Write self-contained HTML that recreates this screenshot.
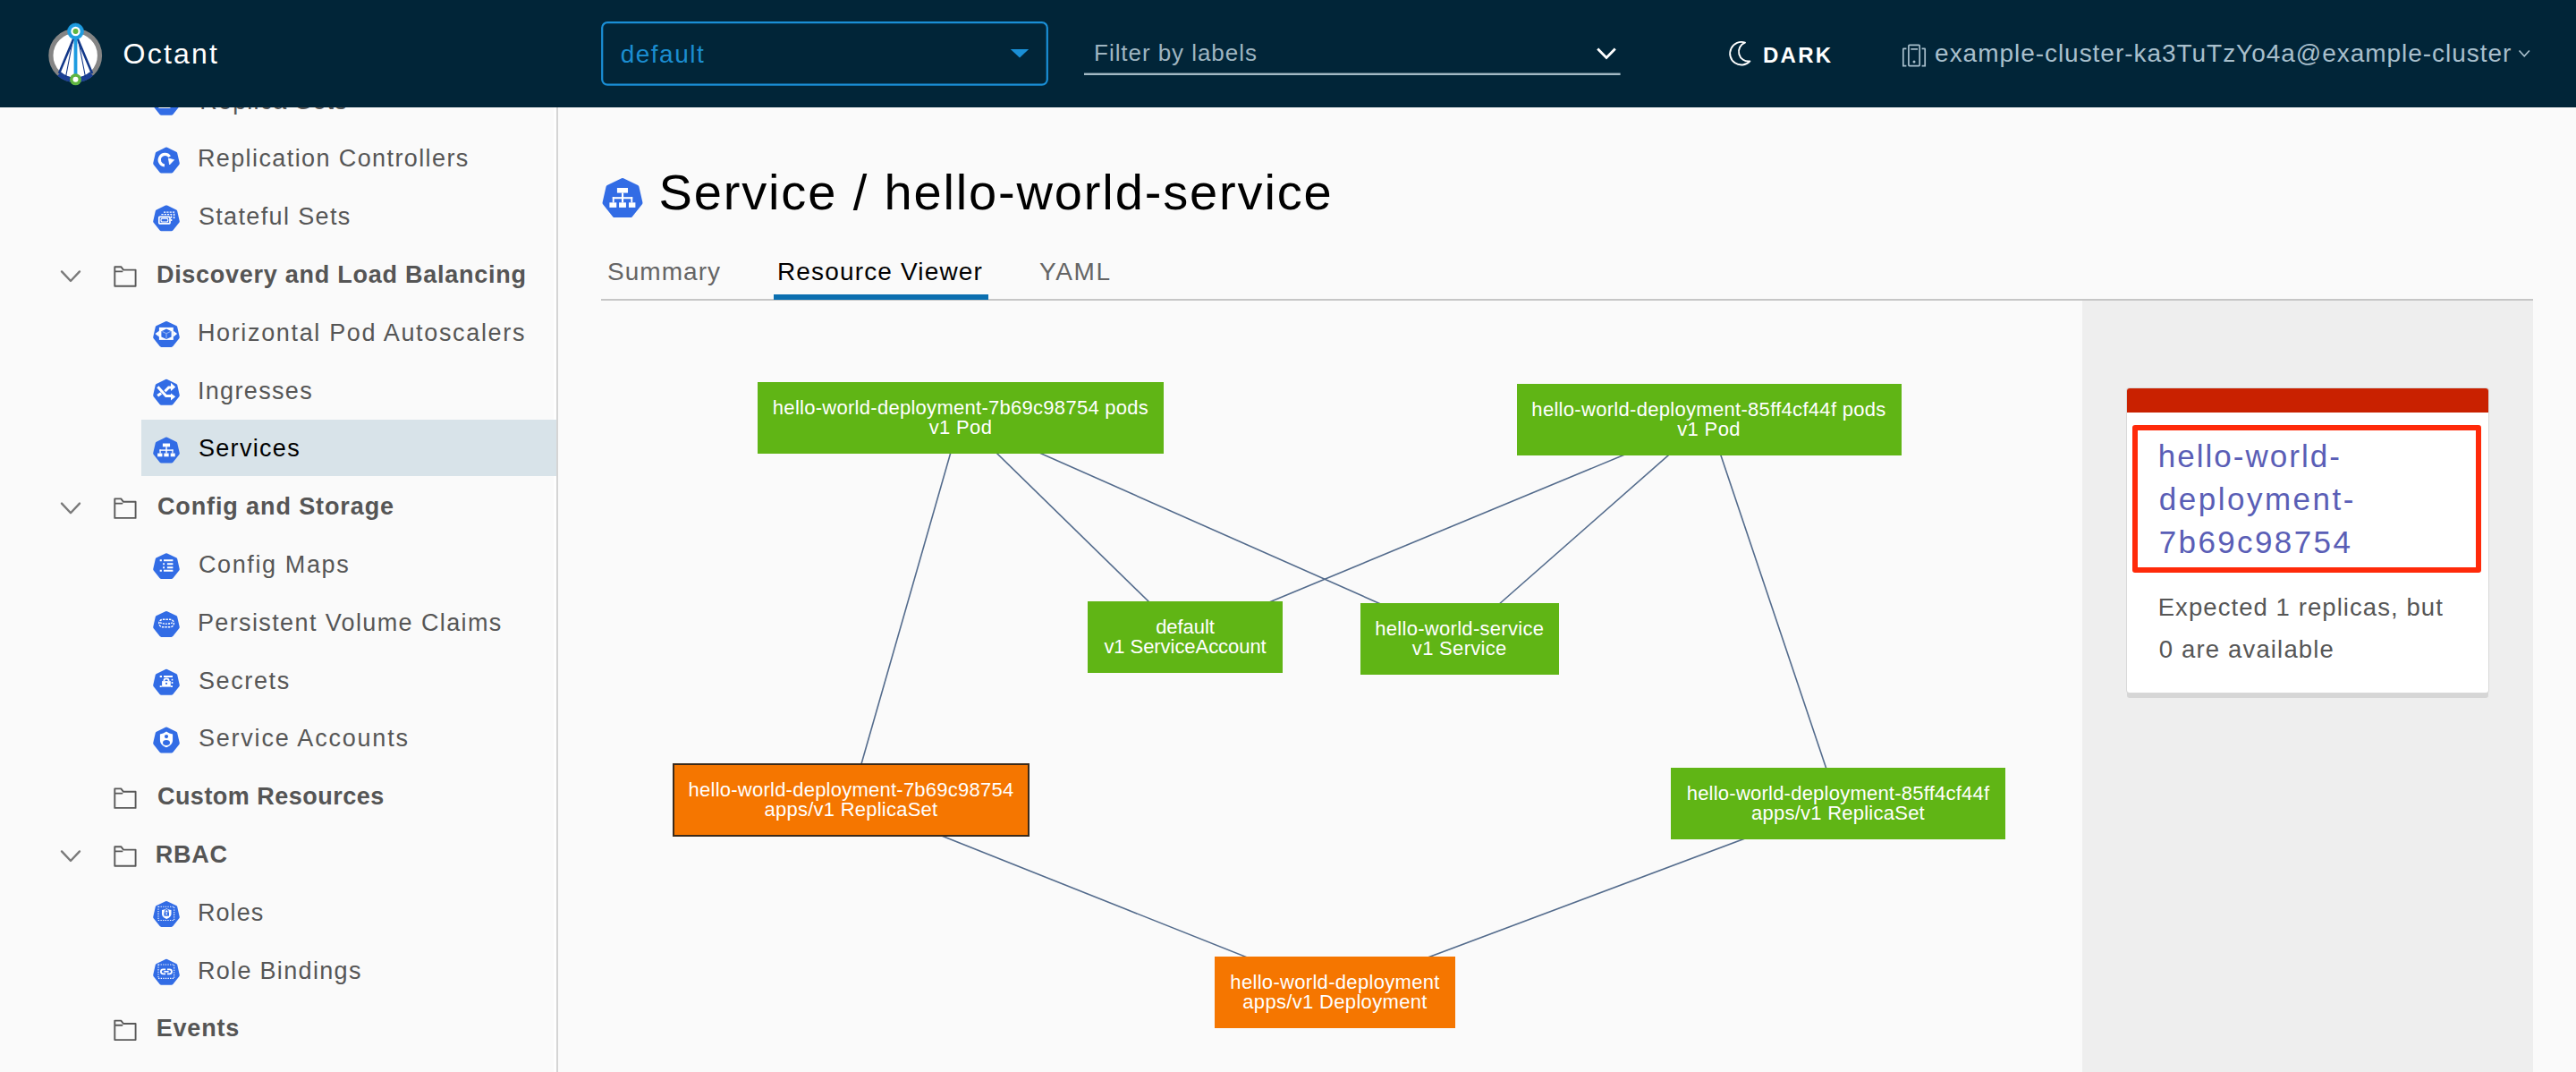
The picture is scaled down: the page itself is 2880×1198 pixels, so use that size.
<!DOCTYPE html>
<html><head><meta charset="utf-8"><style>
html,body{margin:0;padding:0;}
body{width:2880px;height:1198px;overflow:hidden;background:#fafafa;position:relative;font-family:'Liberation Sans', sans-serif;}
.t{position:absolute;white-space:pre;line-height:1;}
.node{position:absolute;display:flex;align-items:center;justify-content:center;text-align:center;color:#fff;font-size:22px;line-height:22px;white-space:pre;box-sizing:border-box;}
svg{position:absolute;left:0;top:0;overflow:visible;}
</style></head><body>
<div id="sidebar" style="position:absolute;left:0;top:0;width:622px;height:1198px;background:#fafafa;border-right:2px solid #d5d5d5;"></div><div style="position:absolute;left:618.5px;top:0;width:3.5px;height:1198px;background:#fefefe"></div>
<div class="t" style="left:223.30px;top:99.5px;font-size:27px;letter-spacing:1.175px;color:#565656;">Replica Sets</div><div class="t" style="left:220.90px;top:164.3px;font-size:27px;letter-spacing:1.399px;color:#565656;">Replication Controllers</div><div class="t" style="left:221.90px;top:229.1px;font-size:27px;letter-spacing:1.359px;color:#565656;">Stateful Sets</div><div class="t" style="left:174.90px;top:293.9px;font-size:27px;font-weight:bold;letter-spacing:0.737px;color:#555555;">Discovery and Load Balancing</div><div class="t" style="left:220.90px;top:358.7px;font-size:27px;letter-spacing:1.653px;color:#565656;">Horizontal Pod Autoscalers</div><div class="t" style="left:220.90px;top:423.5px;font-size:27px;letter-spacing:1.342px;color:#565656;">Ingresses</div><div style="position:absolute;left:158px;top:469.2px;width:464px;height:63.3px;background:#d8e3e9"></div><div class="t" style="left:221.90px;top:488.3px;font-size:27px;letter-spacing:1.324px;color:#000000;">Services</div><div class="t" style="left:175.90px;top:553.1px;font-size:27px;font-weight:bold;letter-spacing:0.894px;color:#555555;">Config and Storage</div><div class="t" style="left:221.90px;top:617.9px;font-size:27px;letter-spacing:1.622px;color:#565656;">Config Maps</div><div class="t" style="left:220.90px;top:682.7px;font-size:27px;letter-spacing:1.382px;color:#565656;">Persistent Volume Claims</div><div class="t" style="left:221.90px;top:747.5px;font-size:27px;letter-spacing:1.626px;color:#565656;">Secrets</div><div class="t" style="left:221.90px;top:812.3px;font-size:27px;letter-spacing:1.799px;color:#565656;">Service Accounts</div><div class="t" style="left:175.90px;top:877.1px;font-size:27px;font-weight:bold;letter-spacing:0.495px;color:#555555;">Custom Resources</div><div class="t" style="left:173.70px;top:941.9px;font-size:27px;font-weight:bold;letter-spacing:0.800px;color:#555555;">RBAC</div><div class="t" style="left:220.90px;top:1006.7px;font-size:27px;letter-spacing:1.092px;color:#565656;">Roles</div><div class="t" style="left:220.90px;top:1071.5px;font-size:27px;letter-spacing:1.324px;color:#565656;">Role Bindings</div><div class="t" style="left:174.70px;top:1136.3px;font-size:27px;font-weight:bold;letter-spacing:0.811px;color:#555555;">Events</div>
<svg width="2880" height="1198" style="z-index:1"><polygon points="186.00,102.00 196.09,106.86 198.58,117.77 191.60,126.52 180.40,126.52 173.42,117.77 175.91,106.86" fill="#326ce5" stroke="#326ce5" stroke-width="4.4" stroke-linejoin="round"/><g transform="translate(186.00,114.90) scale(1.0)" fill="none" stroke="#ffffff"><rect x="-8.2" y="-2.1" width="12.2" height="7.4" rx="0.8" stroke-width="1.7"/><rect x="-6.0" y="-0.3" width="7.8" height="3.8" rx="1.6" stroke-width="1.2"/><path d="M-5.6,-4.9 H5.6 V2.4" stroke-width="1.4" stroke-dasharray="2.2,1.1"/><path d="M-3.0,-7.4 H8.6 V0" stroke-width="1.4" stroke-dasharray="2.2,1.1"/></g><polygon points="186.00,166.80 196.09,171.66 198.58,182.57 191.60,191.32 180.40,191.32 173.42,182.57 175.91,171.66" fill="#326ce5" stroke="#326ce5" stroke-width="4.4" stroke-linejoin="round"/><g transform="translate(186.00,179.70) scale(1.0)" fill="none" stroke="#ffffff"><path d="M3.66,-4.61 A6.3,6.3 0 1 0 -2.05,5.28" stroke-width="3.2"/><path d="M2.4,-2.6 L8.6,-1.0 L3.6,4.2 z" fill="#ffffff" stroke="#ffffff" stroke-width="0.8" stroke-linejoin="round"/></g><polygon points="186.00,231.60 196.09,236.46 198.58,247.37 191.60,256.12 180.40,256.12 173.42,247.37 175.91,236.46" fill="#326ce5" stroke="#326ce5" stroke-width="4.4" stroke-linejoin="round"/><g transform="translate(186.00,244.50) scale(1.0)" fill="none" stroke="#ffffff"><rect x="-8.2" y="-2.1" width="12.2" height="7.4" rx="0.8" stroke-width="1.7"/><rect x="-6.0" y="-0.3" width="7.8" height="3.8" rx="1.6" stroke-width="1.2"/><path d="M-5.6,-4.9 H5.6 V2.4" stroke-width="1.4" stroke-dasharray="2.2,1.1"/><path d="M-3.0,-7.4 H8.6 V0" stroke-width="1.4" stroke-dasharray="2.2,1.1"/></g><path d="M69,303.4 L79,314.0 L89,303.4" fill="none" stroke="#7a7a7a" stroke-width="2.4" stroke-linecap="round" stroke-linejoin="round"/><path d="M128.3,298.2 H135.3 L138,301.6 H151.6 V319.7 H128.3 z M128.3,303.4 H136.5" fill="none" stroke="#595959" stroke-width="1.9" stroke-linejoin="round" stroke-linecap="round"/><polygon points="186.00,361.20 196.09,366.06 198.58,376.97 191.60,385.72 180.40,385.72 173.42,376.97 175.91,366.06" fill="#326ce5" stroke="#326ce5" stroke-width="4.4" stroke-linejoin="round"/><g transform="translate(186.00,374.10) scale(1.0)" fill="none" stroke="#ffffff"><rect x="-8.1" y="-8.2" width="15.9" height="14" fill="#ffffff" stroke="none"/><path d="M0,-6.6 L5.6,-3.8 V2.4 L0,5.0 L-5.6,2.4 V-3.8 z" fill="#326ce5" stroke="none"/><path d="M-4.6,-3.6 L0,-1.4 L4.6,-3.6 M0,-1.4 V4" stroke="#8fb0f2" stroke-width="1.2"/><path d="M-12.5,-1 L-8.1,-4.4 V2.4 z M12.1,-1 L7.8,-4.4 V2.4 z" fill="#ffffff" stroke="none"/></g><polygon points="186.00,426.00 196.09,430.86 198.58,441.77 191.60,450.52 180.40,450.52 173.42,441.77 175.91,430.86" fill="#326ce5" stroke="#326ce5" stroke-width="4.4" stroke-linejoin="round"/><g transform="translate(186.00,438.90) scale(1.0)" fill="none" stroke="#ffffff"><path d="M-9.6,-6.6 L-0.4,3.6 H5.5" stroke-width="3.0"/><path d="M-9.8,3.4 L-5.8,0.6" stroke-width="3.0"/><path d="M-1.6,-1.6 L2.6,-5.8 H5.5" stroke-width="3.0"/><path d="M5,-11.2 L10.2,-6.3 L5,-1.8 z M5,0.6 L10.2,4.3 L5,8.6 z" fill="#ffffff" stroke="none"/></g><polygon points="186.00,490.80 196.09,495.66 198.58,506.57 191.60,515.32 180.40,515.32 173.42,506.57 175.91,495.66" fill="#326ce5" stroke="#326ce5" stroke-width="4.4" stroke-linejoin="round"/><g transform="translate(186.00,503.70) scale(1.0)" fill="none" stroke="#ffffff"><g fill="#ffffff" stroke="none"><rect x="-4.1" y="-8.15" width="8.15" height="3.75"/><rect x="-0.7" y="-4.5" width="1.45" height="7.4"/><rect x="-7.55" y="-1.3" width="15.1" height="1.4"/><rect x="-7.55" y="-1.3" width="1.25" height="4.2"/><rect x="6.3" y="-1.3" width="1.25" height="4.2"/><rect x="-9.85" y="2.85" width="5.3" height="3.75"/><rect x="-2.65" y="2.85" width="5.3" height="3.75"/><rect x="4.7" y="2.85" width="5.0" height="3.75"/></g></g><path d="M69,562.6 L79,573.2 L89,562.6" fill="none" stroke="#7a7a7a" stroke-width="2.4" stroke-linecap="round" stroke-linejoin="round"/><path d="M128.3,557.4 H135.3 L138,560.8 H151.6 V578.9 H128.3 z M128.3,562.6 H136.5" fill="none" stroke="#595959" stroke-width="1.9" stroke-linejoin="round" stroke-linecap="round"/><polygon points="186.00,620.40 196.09,625.26 198.58,636.17 191.60,644.92 180.40,644.92 173.42,636.17 175.91,625.26" fill="#326ce5" stroke="#326ce5" stroke-width="4.4" stroke-linejoin="round"/><g transform="translate(186.00,633.30) scale(1.0)" fill="none" stroke="#ffffff"><path d="M-7.3,-7 H-5.1 M-3,-7 H7.4 M-7.3,4.4 H-5.1 M-3,4.4 H7.4" stroke-width="2"/><path d="M-3.8,-3 H-2 M0.9,-3 H7.4 M-3.8,0.9 H-2 M0.9,0.9 H7.4" stroke-width="2"/></g><polygon points="186.00,685.20 196.09,690.06 198.58,700.97 191.60,709.72 180.40,709.72 173.42,700.97 175.91,690.06" fill="#326ce5" stroke="#326ce5" stroke-width="4.4" stroke-linejoin="round"/><g transform="translate(186.00,698.10) scale(1.0)" fill="none" stroke="#ffffff"><rect x="-8.2" y="-5.8" width="16.6" height="8.4" rx="4.2" stroke-width="1.4" stroke-dasharray="2.4,1.1"/><path d="M-7,-2.2 C-3,-0.6 3,-0.6 7,-2.2" stroke-width="1.3" stroke-dasharray="2,1"/></g><polygon points="186.00,750.00 196.09,754.86 198.58,765.77 191.60,774.52 180.40,774.52 173.42,765.77 175.91,754.86" fill="#326ce5" stroke="#326ce5" stroke-width="4.4" stroke-linejoin="round"/><g transform="translate(186.00,762.90) scale(1.0)" fill="none" stroke="#ffffff"><path d="M-7.3,-6.9 H-5 M-3,-6.9 H7 M-7.3,4.3 H-5.2 M4.8,4.3 H7" stroke-width="1.8"/><path d="M6.5,-4.2 V-2.5 M6.5,-0.8 V1" stroke-width="1.6"/><rect x="-4.9" y="-1.8" width="9.7" height="6.5" fill="#ffffff" stroke="none"/><path d="M-2.6,-1.8 V-2.2 A2.6,2.4 0 0 1 2.6,-2.2 V-1.8" stroke-width="1.8"/><circle cx="0" cy="0.9" r="1.1" fill="#326ce5" stroke="none"/></g><polygon points="186.00,814.80 196.09,819.66 198.58,830.57 191.60,839.32 180.40,839.32 173.42,830.57 175.91,819.66" fill="#326ce5" stroke="#326ce5" stroke-width="4.4" stroke-linejoin="round"/><g transform="translate(186.00,827.70) scale(1.0)" fill="none" stroke="#ffffff"><path d="M0,-10.2 C2.2,-8.6 4.8,-7.6 7.1,-7.2 V-0.6 C7.1,3.8 3.6,6.2 0,7.6 C-3.6,6.2 -7.1,3.8 -7.1,-0.6 V-7.2 C-4.8,-7.6 -2.2,-8.6 0,-10.2 z" fill="#ffffff" stroke="none"/><circle cx="0" cy="-4.6" r="2.1" fill="#326ce5" stroke="none"/><ellipse cx="0" cy="2.4" rx="4.0" ry="3.0" fill="#326ce5" stroke="none"/></g><path d="M128.3,881.4 H135.3 L138,884.8 H151.6 V902.9 H128.3 z M128.3,886.6 H136.5" fill="none" stroke="#595959" stroke-width="1.9" stroke-linejoin="round" stroke-linecap="round"/><path d="M69,951.4 L79,962.0 L89,951.4" fill="none" stroke="#7a7a7a" stroke-width="2.4" stroke-linecap="round" stroke-linejoin="round"/><path d="M128.3,946.2 H135.3 L138,949.6 H151.6 V967.7 H128.3 z M128.3,951.4 H136.5" fill="none" stroke="#595959" stroke-width="1.9" stroke-linejoin="round" stroke-linecap="round"/><polygon points="186.00,1009.20 196.09,1014.06 198.58,1024.97 191.60,1033.72 180.40,1033.72 173.42,1024.97 175.91,1014.06" fill="#326ce5" stroke="#326ce5" stroke-width="4.4" stroke-linejoin="round"/><g transform="translate(186.00,1022.10) scale(1.0)" fill="none" stroke="#ffffff"><rect x="-9" y="-8.8" width="17.7" height="15.2" stroke-width="1.1" stroke-dasharray="1.3,1.3"/><path d="M0.25,-6.9 C2,-5.8 3.8,-5.2 5.5,-5 V-0.8 C5.5,2.2 3,3.8 0.25,4.8 C-2.5,3.8 -5,2.2 -5,-0.8 V-5 C-3.3,-5.2 -1.5,-5.8 0.25,-6.9 z" fill="#ffffff" stroke="none"/><rect x="-2.6" y="-2.7" width="5.6" height="4.2" fill="#326ce5" stroke="none"/><path d="M-1.5,-2.7 V-3.8 A1.75,1.75 0 0 1 2,-3.8 V-2.7" stroke="#326ce5" stroke-width="1.2"/><rect x="-0.6" y="-1.6" width="1.6" height="1.6" fill="#ffffff" stroke="none"/></g><polygon points="186.00,1074.00 196.09,1078.86 198.58,1089.77 191.60,1098.52 180.40,1098.52 173.42,1089.77 175.91,1078.86" fill="#326ce5" stroke="#326ce5" stroke-width="4.4" stroke-linejoin="round"/><g transform="translate(186.00,1086.90) scale(1.0)" fill="none" stroke="#ffffff"><rect x="-9" y="-8.9" width="17.7" height="15.4" stroke-width="1.1" stroke-dasharray="1.3,1.3"/><path d="M-0.9,-3.6 H-3.6 A2.5,2.5 0 0 0 -3.6,1.4 H-0.9 M1.0,-3.6 H3.5 A2.5,2.5 0 0 1 3.5,1.4 H1.0" stroke-width="1.8"/><path d="M-2.6,-1.1 H2.6" stroke-width="1.6"/></g><path d="M128.3,1140.6 H135.3 L138,1144.0 H151.6 V1162.1 H128.3 z M128.3,1145.8 H136.5" fill="none" stroke="#595959" stroke-width="1.9" stroke-linejoin="round" stroke-linecap="round"/></svg>
<div id="main">
<svg width="2880" height="1198"><polygon points="696.00,201.50 712.11,209.26 716.08,226.68 704.94,240.66 687.06,240.66 675.92,226.68 679.89,209.26" fill="#326ce5" stroke="#326ce5" stroke-width="4.8" stroke-linejoin="round"/><g transform="translate(696.00,222.10) scale(1.484)" fill="none" stroke="#ffffff"><g fill="#ffffff" stroke="none"><rect x="-4.1" y="-8.15" width="8.15" height="3.75"/><rect x="-0.7" y="-4.5" width="1.45" height="7.4"/><rect x="-7.55" y="-1.3" width="15.1" height="1.4"/><rect x="-7.55" y="-1.3" width="1.25" height="4.2"/><rect x="6.3" y="-1.3" width="1.25" height="4.2"/><rect x="-9.85" y="2.85" width="5.3" height="3.75"/><rect x="-2.65" y="2.85" width="5.3" height="3.75"/><rect x="4.7" y="2.85" width="5.0" height="3.75"/></g></g></svg>
<div class="t" style="left:736.50px;top:186.8px;font-size:56px;letter-spacing:1.856px;color:#000000;">Service / hello-world-service</div>
<div class="t" style="left:679.00px;top:289.8px;font-size:28px;letter-spacing:1.051px;color:#656565;">Summary</div><div class="t" style="left:869.00px;top:289.8px;font-size:28px;letter-spacing:1.150px;color:#000000;">Resource Viewer</div><div class="t" style="left:1162.00px;top:289.8px;font-size:28px;letter-spacing:1.609px;color:#656565;">YAML</div>
<div style="position:absolute;left:672px;top:334px;width:2160px;height:2px;background:#c6c6c6"></div>
<div style="position:absolute;left:864.8px;top:329px;width:240px;height:6px;background:#0b6fb0"></div>
<div style="position:absolute;left:2327.5px;top:336px;width:504px;height:862px;background:#eeeeee"></div>
<svg width="2880" height="1198"><g stroke="#536b8c" stroke-width="1.6"><line x1="1074.0" y1="467.0" x2="951.5" y2="893.8"/><line x1="1074.0" y1="467.0" x2="1325.0" y2="712.0"/><line x1="1074.0" y1="467.0" x2="1631.8" y2="714.0"/><line x1="1910.5" y1="469.0" x2="1325.0" y2="712.0"/><line x1="1910.5" y1="469.0" x2="1631.8" y2="714.0"/><line x1="1910.5" y1="469.0" x2="2055.0" y2="898.0"/><line x1="951.5" y1="893.8" x2="1492.5" y2="1109.0"/><line x1="2055.0" y1="898.0" x2="1492.5" y2="1109.0"/></g></svg>
<div class="node" style="left:847px;top:427px;width:454px;height:80px;background:#60b515;"><div><div style="letter-spacing:0.278px">hello-world-deployment-7b69c98754 pods</div><div style="letter-spacing:0.325px">v1 Pod</div></div></div><div class="node" style="left:1695.5px;top:429px;width:430px;height:80px;background:#60b515;"><div><div style="letter-spacing:0.302px">hello-world-deployment-85ff4cf44f pods</div><div style="letter-spacing:0.372px">v1 Pod</div></div></div><div class="node" style="left:1216px;top:672px;width:218px;height:80px;background:#60b515;"><div><div style="letter-spacing:-0.055px">default</div><div style="letter-spacing:-0.056px">v1 ServiceAccount</div></div></div><div class="node" style="left:1521px;top:674px;width:221.5px;height:80px;background:#60b515;"><div><div style="letter-spacing:0.301px">hello-world-service</div><div style="letter-spacing:0.314px">v1 Service</div></div></div><div class="node" style="left:752px;top:853px;width:399px;height:81.5px;background:#f57600;box-shadow:inset 0 0 0 2px #3b2a1a;"><div><div style="letter-spacing:0.241px">hello-world-deployment-7b69c98754</div><div style="letter-spacing:0.241px">apps/v1 ReplicaSet</div></div></div><div class="node" style="left:1868px;top:858px;width:374px;height:80px;background:#60b515;"><div><div style="letter-spacing:0.231px">hello-world-deployment-85ff4cf44f</div><div style="letter-spacing:0.245px">apps/v1 ReplicaSet</div></div></div><div class="node" style="left:1358px;top:1069px;width:269px;height:80px;background:#f57600;"><div><div style="letter-spacing:0.312px">hello-world-deployment</div><div style="letter-spacing:0.327px">apps/v1 Deployment</div></div></div>
<div style="position:absolute;left:2377.6px;top:433.8px;width:404.7px;height:340px;background:#fff;border-radius:3px;box-shadow:0 0 0 1px #d9d9d9, 0 6px 0 0 #d6d6d6;overflow:hidden">
<div style="height:27.6px;background:#c92100"></div>
</div>
<div style="position:absolute;left:2383.8px;top:475.2px;width:389.9px;height:164.6px;box-sizing:border-box;border:6.6px solid #ff2a0a;border-radius:3px"></div>
<div class="t" style="left:2412.70px;top:492.4px;font-size:35px;letter-spacing:2.027px;color:#5a5eb6;">hello-world-</div><div class="t" style="left:2413.70px;top:539.9px;font-size:35px;letter-spacing:2.519px;color:#5a5eb6;">deployment-</div><div class="t" style="left:2413.70px;top:587.9px;font-size:35px;letter-spacing:2.389px;color:#5a5eb6;">7b69c98754</div>
<div class="t" style="left:2412.70px;top:665.2px;font-size:27.5px;letter-spacing:1.069px;color:#565656;">Expected 1 replicas, but</div><div class="t" style="left:2413.70px;top:711.7px;font-size:27.5px;letter-spacing:1.166px;color:#565656;">0 are available</div>
</div>
<div id="header" style="position:absolute;left:0;top:0;width:2880px;height:119.5px;background:#012538;z-index:5">
<svg width="2880" height="120">
<circle cx="84.2" cy="62" r="27.3" fill="#ffffff" stroke="#858585" stroke-width="5.2"/>
<path d="M66.2,82.6 A27.3,27.3 0 0 0 102.2,82.6" fill="none" stroke="#1a3f94" stroke-width="5.8"/>
<path d="M84.5,38 L66,82 M84.5,38 L103,82" stroke="#12388a" stroke-width="2.6" fill="none"/>
<path d="M82,42 L73.5,86 M87,42 L95.5,86" stroke="#12388a" stroke-width="1.1" fill="none"/>
<path d="M84.5,38 V86" stroke="#1e9ce0" stroke-width="3.8"/>
<circle cx="84.5" cy="35" r="9.0" fill="#1e9ce0" stroke="#1e9ce0" stroke-width="0.6"/>
<circle cx="84.5" cy="35" r="5.2" fill="#ffffff"/>
<circle cx="84.5" cy="35" r="3" fill="#5fb540"/>
<circle cx="84.5" cy="88.8" r="6.5" fill="#5fb540"/>
<circle cx="84.5" cy="88.8" r="3" fill="#ffffff"/>

<rect x="673.2" y="25.1" width="497.6" height="69.6" rx="6" fill="none" stroke="#1a8fd6" stroke-width="2.2"/>
<path d="M1129.8,55 H1150.2 L1140,64.6 z" fill="#1a8fd6"/>
<rect x="1212" y="81.6" width="599.6" height="2.4" fill="#a3b9c4"/>
<path d="M1786.2,54.5 L1796,64.5 L1805.8,54.5" fill="none" stroke="#ffffff" stroke-width="2.8"/>
<path d="M1951,47.6 A12.8,12.8 0 1 0 1956.4,68.4 A10.8,10.8 0 0 1 1951,47.6 z" fill="none" stroke="#ffffff" stroke-width="1.9" stroke-linejoin="round"/>
<path d="M2131.4,54.4 H2128.3 Q2127.8,54.4 2127.8,55 V73.6 H2131.4 M2148.6,54.4 H2151.7 Q2152.2,54.4 2152.2,55 V73.6 H2148.6" fill="none" stroke="#a8bfcc" stroke-width="1.7"/>
<rect x="2133.9" y="50.3" width="12.3" height="23.3" rx="1" fill="none" stroke="#a8bfcc" stroke-width="1.7"/>
<path d="M2136.3,54.9 H2144" stroke="#a8bfcc" stroke-width="1.7"/>
<circle cx="2140" cy="68.9" r="1.5" fill="#a8bfcc"/>
<path d="M2816.5,56.5 L2822.2,62.8 L2827.9,56.5" fill="none" stroke="#a8bfcc" stroke-width="1.7"/>
</svg>
<div class="t" style="left:137.50px;top:44.4px;font-size:32px;letter-spacing:2.247px;color:#ffffff;">Octant</div><div class="t" style="left:693.70px;top:46.8px;font-size:28px;letter-spacing:1.487px;color:#1b8dd0;">default</div><div class="t" style="left:1223.10px;top:46.0px;font-size:26px;letter-spacing:0.945px;color:#9fb5c1;">Filter by labels</div><div class="t" style="left:1971.00px;top:50.2px;font-size:24px;font-weight:bold;letter-spacing:2.257px;color:#ffffff;">DARK</div><div class="t" style="left:2163.10px;top:46.3px;font-size:28px;letter-spacing:0.964px;color:#a8bfcc;">example-cluster-ka3TuTzYo4a@example-cluster</div>
</div>
</body></html>
